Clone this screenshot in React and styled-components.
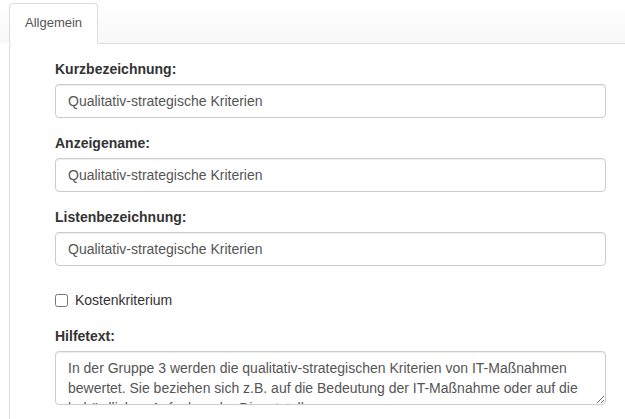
import styled, { createGlobalStyle } from 'styled-components';

const GlobalStyle = createGlobalStyle`
  html, body {
    margin: 0;
    padding: 0;
    background: #fff;
    font-family: "Liberation Sans", Arial, Helvetica, sans-serif;
    font-size: 14px;
    line-height: 20px;
    color: #333;
  }
  * { box-sizing: border-box; }
`;

const Page = styled.div`
  width: 625px;
  height: 419px;
  overflow: hidden;
`;

const TabStrip = styled.div`
  display: flex;
  padding: 3px 0 0 9px;
  background: linear-gradient(#ffffff, #f8f8f8);
`;

const Tab = styled.div`
  padding: 9px 15px 10px;
  font-size: 13px;
  line-height: 20px;
  color: #555;
  background: #fff;
  border: 1px solid #ddd;
  border-bottom-color: #fff;
  border-radius: 4px 4px 0 0;
  margin-bottom: -1px;
  position: relative;
  z-index: 1;
`;

const Panel = styled.div`
  margin-left: 9px;
  border-top: 1px solid #ddd;
  border-left: 1px solid #ddd;
  border-top-left-radius: 4px;
  padding: 15px 19px 0 45px;
  min-height: 380px;
`;

const Group = styled.div`
  margin-bottom: 15px;
`;

const Label = styled.label`
  display: block;
  font-weight: bold;
  margin-bottom: 5px;
`;

const Input = styled.input`
  display: block;
  width: 100%;
  height: 34px;
  padding: 6px 12px;
  font: inherit;
  color: #555;
  background: #fff;
  border: 1px solid #ccc;
  border-radius: 4px;
  box-shadow: inset 0 1px 1px rgba(0, 0, 0, 0.075);
  outline: none;
`;

const CheckRow = styled.label`
  display: flex;
  align-items: center;
  gap: 7px;
  margin: 24px 0 16px;
  cursor: pointer;
`;

const Check = styled.input`
  width: 13px;
  height: 13px;
  margin: 0;
`;

const Area = styled.textarea`
  display: block;
  width: 100%;
  height: 54px;
  padding: 6px 12px;
  font: inherit;
  line-height: 20px;
  color: #555;
  background: #fff;
  border: 1px solid #ccc;
  border-radius: 4px;
  box-shadow: inset 0 1px 1px rgba(0, 0, 0, 0.075);
  resize: vertical;
  outline: none;
  overflow: hidden;
`;

const fields = [
  { id: 'kurz', label: 'Kurzbezeichnung:' },
  { id: 'anzeige', label: 'Anzeigename:' },
  { id: 'liste', label: 'Listenbezeichnung:' },
];

export default function App() {
  return (
    <Page>
      <GlobalStyle />
      <TabStrip>
        <Tab>Allgemein</Tab>
      </TabStrip>
      <Panel>
        {fields.map(f => (
          <Group key={f.id}>
            <Label htmlFor={f.id}>{f.label}</Label>
            <Input id={f.id} defaultValue="Qualitativ-strategische Kriterien" />
          </Group>
        ))}
        <CheckRow>
          <Check type="checkbox" />
          Kostenkriterium
        </CheckRow>
        <Group>
          <Label htmlFor="hilfe">Hilfetext:</Label>
          <Area
            id="hilfe"
            defaultValue="In der Gruppe 3 werden die qualitativ-strategischen Kriterien von IT-Maßnahmen bewertet. Sie beziehen sich z.B. auf die Bedeutung der IT-Maßnahme oder auf die behördlichen Aufgaben der Dienststelle."
          />
        </Group>
      </Panel>
    </Page>
  );
}
